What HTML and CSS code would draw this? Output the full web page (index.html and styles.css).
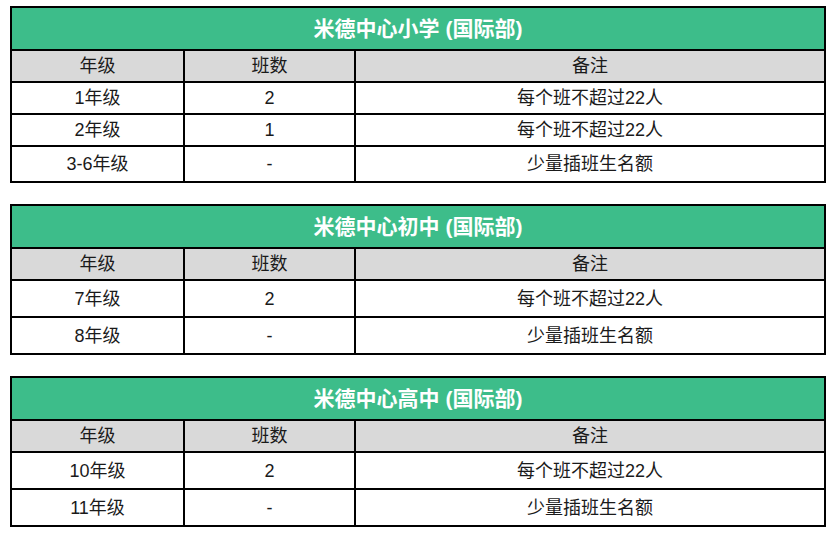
FILE: index.html
```html
<!DOCTYPE html>
<html lang="zh-CN">
<head>
<meta charset="utf-8">
<title>米德中心 国际部 班级</title>
<link rel="stylesheet" href="styles.css">
</head>
<body>
<main class="page">
  <table class="plan plan-primary">
    <colgroup><col class="c1"><col class="c2"><col class="c3"></colgroup>
    <thead>
      <tr class="title-row"><th colspan="3">米德中心小学 (国际部)</th></tr>
      <tr class="head-row"><th>年级</th><th>班数</th><th>备注</th></tr>
    </thead>
    <tbody>
      <tr><td>1年级</td><td>2</td><td>每个班不超过22人</td></tr>
      <tr><td>2年级</td><td>1</td><td>每个班不超过22人</td></tr>
      <tr class="tall"><td>3-6年级</td><td>-</td><td>少量插班生名额</td></tr>
    </tbody>
  </table>

  <table class="plan">
    <colgroup><col class="c1"><col class="c2"><col class="c3"></colgroup>
    <thead>
      <tr class="title-row"><th colspan="3">米德中心初中 (国际部)</th></tr>
      <tr class="head-row"><th>年级</th><th>班数</th><th>备注</th></tr>
    </thead>
    <tbody>
      <tr><td>7年级</td><td>2</td><td>每个班不超过22人</td></tr>
      <tr><td>8年级</td><td>-</td><td>少量插班生名额</td></tr>
    </tbody>
  </table>

  <table class="plan">
    <colgroup><col class="c1"><col class="c2"><col class="c3"></colgroup>
    <thead>
      <tr class="title-row"><th colspan="3">米德中心高中 (国际部)</th></tr>
      <tr class="head-row"><th>年级</th><th>班数</th><th>备注</th></tr>
    </thead>
    <tbody>
      <tr><td>10年级</td><td>2</td><td>每个班不超过22人</td></tr>
      <tr><td>11年级</td><td>-</td><td>少量插班生名额</td></tr>
    </tbody>
  </table>
</main>
</body>
</html>
```
FILE: styles.css
```css
html, body {
  margin: 0;
  padding: 0;
  background: #ffffff;
}

.page {
  padding: 6px 8px 0 10px;
  display: flex;
  flex-direction: column;
  gap: 21px;
  font-family: "Liberation Sans", "Noto Sans CJK SC", sans-serif;
  color: #1a1a1a;
}

.plan {
  width: 816px;
  border-collapse: collapse;
  table-layout: fixed;
  border: 2px solid #000;
}

.c1 { width: 173px; }
.c2 { width: 171px; }
.c3 { width: 470px; }

.plan th,
.plan td {
  border: 2px solid #000;
  padding: 0;
  text-align: center;
  vertical-align: middle;
  font-size: 18px;
  font-weight: normal;
  line-height: 20px;
}

.title-row th {
  height: 41px;
  background: #3dbd8a;
  color: #ffffff;
  font-weight: bold;
  font-size: 21px;
}

.head-row th {
  height: 30px;
  background: #d9d9d9;
  color: #1a1a1a;
}

.plan tbody td {
  height: 35px;
}

.plan-primary tbody td {
  height: 30px;
}

.plan-primary tbody tr.tall td {
  height: 34px;
}
```
